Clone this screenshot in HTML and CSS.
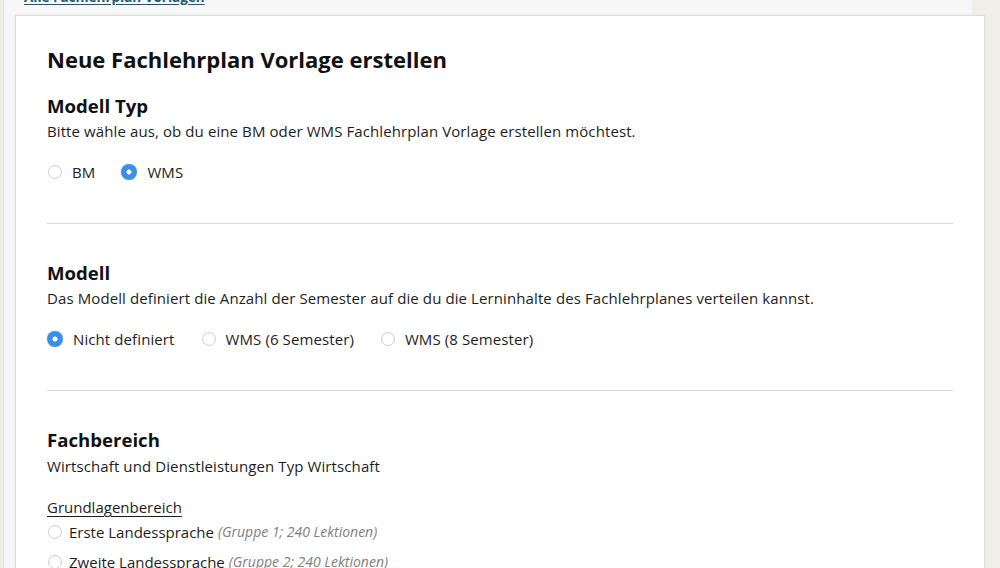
FILE: index.html
```html
<!DOCTYPE html>
<html lang="de">
<head>
<meta charset="utf-8">
<title>Neue Fachlehrplan Vorlage erstellen</title>
<link rel="stylesheet" href="styles.css">
</head>
<body>
<div class="page">
  <div class="panel">
    <a class="back" href="#">Alle Fachlehrplan Vorlagen</a>
    <div class="card">
      <h1 class="title">Neue Fachlehrplan Vorlage erstellen</h1>

      <section class="section">
        <h2 class="section-title">Modell Typ</h2>
        <p class="section-desc">Bitte wähle aus, ob du eine BM oder WMS Fachlehrplan Vorlage erstellen möchtest.</p>
        <div class="radio-row">
          <label class="radio"><span class="dot"></span><span class="label">BM</span></label>
          <label class="radio"><span class="dot checked"></span><span class="label">WMS</span></label>
        </div>
      </section>

      <hr class="divider">

      <section class="section">
        <h2 class="section-title">Modell</h2>
        <p class="section-desc">Das Modell definiert die Anzahl der Semester auf die du die Lerninhalte des Fachlehrplanes verteilen kannst.</p>
        <div class="radio-row">
          <label class="radio"><span class="dot checked"></span><span class="label">Nicht definiert</span></label>
          <label class="radio"><span class="dot"></span><span class="label">WMS (6 Semester)</span></label>
          <label class="radio"><span class="dot"></span><span class="label">WMS (8 Semester)</span></label>
        </div>
      </section>

      <hr class="divider">

      <section class="section">
        <h2 class="section-title">Fachbereich</h2>
        <p class="section-desc tight">Wirtschaft und Dienstleistungen Typ Wirtschaft</p>
        <h3 class="group-title">Grundlagenbereich</h3>
        <ul class="subject-list">
          <li class="subject"><span class="dot small"></span><span class="subject-name">Erste Landessprache</span><span class="meta">(Gruppe 1; 240 Lektionen)</span></li>
          <li class="subject"><span class="dot small"></span><span class="subject-name">Zweite Landessprache</span><span class="meta">(Gruppe 2; 240 Lektionen)</span></li>
        </ul>
      </section>
    </div>
  </div>
</div>
</body>
</html>
```

FILE: styles.css
```css
html, body {
  margin: 0;
  padding: 0;
  height: 100%;
  overflow: hidden;
}
body {
  background: #efefe8;
  font-family: "Open Sans", "Helvetica Neue", Arial, sans-serif;
  color: #1d1d1d;
}
.page {
  display: flex;
  height: 100%;
}
.panel {
  margin-left: 3px;
  width: 969px;
  flex: none;
  background: #f7f7f7;
  border-left: 1px solid #e4e4e4;
  padding-left: 11px;
  box-sizing: border-box;
}
.back {
  display: block;
  margin-top: -12px;
  margin-left: 9px;
  height: 26px;
  line-height: 18px;
  font-size: 13.5px;
  font-weight: 700;
  color: #1e5b79;
  text-decoration: underline;
  text-underline-offset: 2px;
  width: max-content;
}
.card {
  width: 970px;
  box-sizing: border-box;
  background: #fff;
  border: 1px solid #dcdcdc;
  box-shadow: 0 0 2px rgba(0,0,0,0.06);
  padding: 29px 31px 40px 31px;
  margin-top: 1px;
}
.title {
  margin: 0;
  font-size: 22px;
  line-height: 28px;
  font-weight: 700;
  color: #111;
}
.section {
  margin-top: 21px;
}
.divider + .section {
  margin-top: 37px;
}
.section-title {
  margin: 0;
  font-size: 18.6px;
  line-height: 24px;
  font-weight: 700;
  color: #111;
}
.section-desc {
  margin: 2px 0 0;
  font-size: 15px;
  line-height: 22px;
  letter-spacing: 0.1px;
}
.section-desc.tight {
  margin-top: 3px;
}
.radio-row {
  display: flex;
  gap: 26px;
  margin-top: 19px;
}
.radio {
  display: flex;
  align-items: center;
  gap: 10px;
  font-size: 15px;
  line-height: 22px;
  letter-spacing: 0.1px;
}
.dot {
  width: 14px;
  height: 14px;
  border-radius: 50%;
  border: 1px solid #cfcfcf;
  background: #fff;
  box-sizing: border-box;
  box-shadow: inset 0 1px 1px rgba(0,0,0,0.04);
  flex: none;
  margin-left: 1px;
}
.dot.checked {
  width: 16px;
  height: 16px;
  margin-left: 0;
  border: none;
  background: radial-gradient(circle, #fff 0 2.2px, #3a8fe8 2.8px);
  box-shadow: 0 0 1px rgba(30,110,210,0.5);
}
.divider {
  border: none;
  border-top: 1px solid #d9d9d9;
  margin: 40px 0 0;
}
.group-title {
  margin: 19px 0 0;
  font-size: 15px;
  line-height: 22px;
  font-weight: 400;
  text-decoration: underline;
  text-underline-offset: 3px;
}
.subject-list {
  list-style: none;
  margin: 3px 0 0;
  padding: 0;
}
.subject {
  display: flex;
  align-items: center;
  font-size: 15px;
  line-height: 22px;
  margin-bottom: 8px;
  white-space: nowrap;
}
.dot.small {
  margin-right: 7px;
}
.meta {
  margin-left: 4px;
  font-size: 14px;
  font-style: italic;
  color: #808080;
}
```
